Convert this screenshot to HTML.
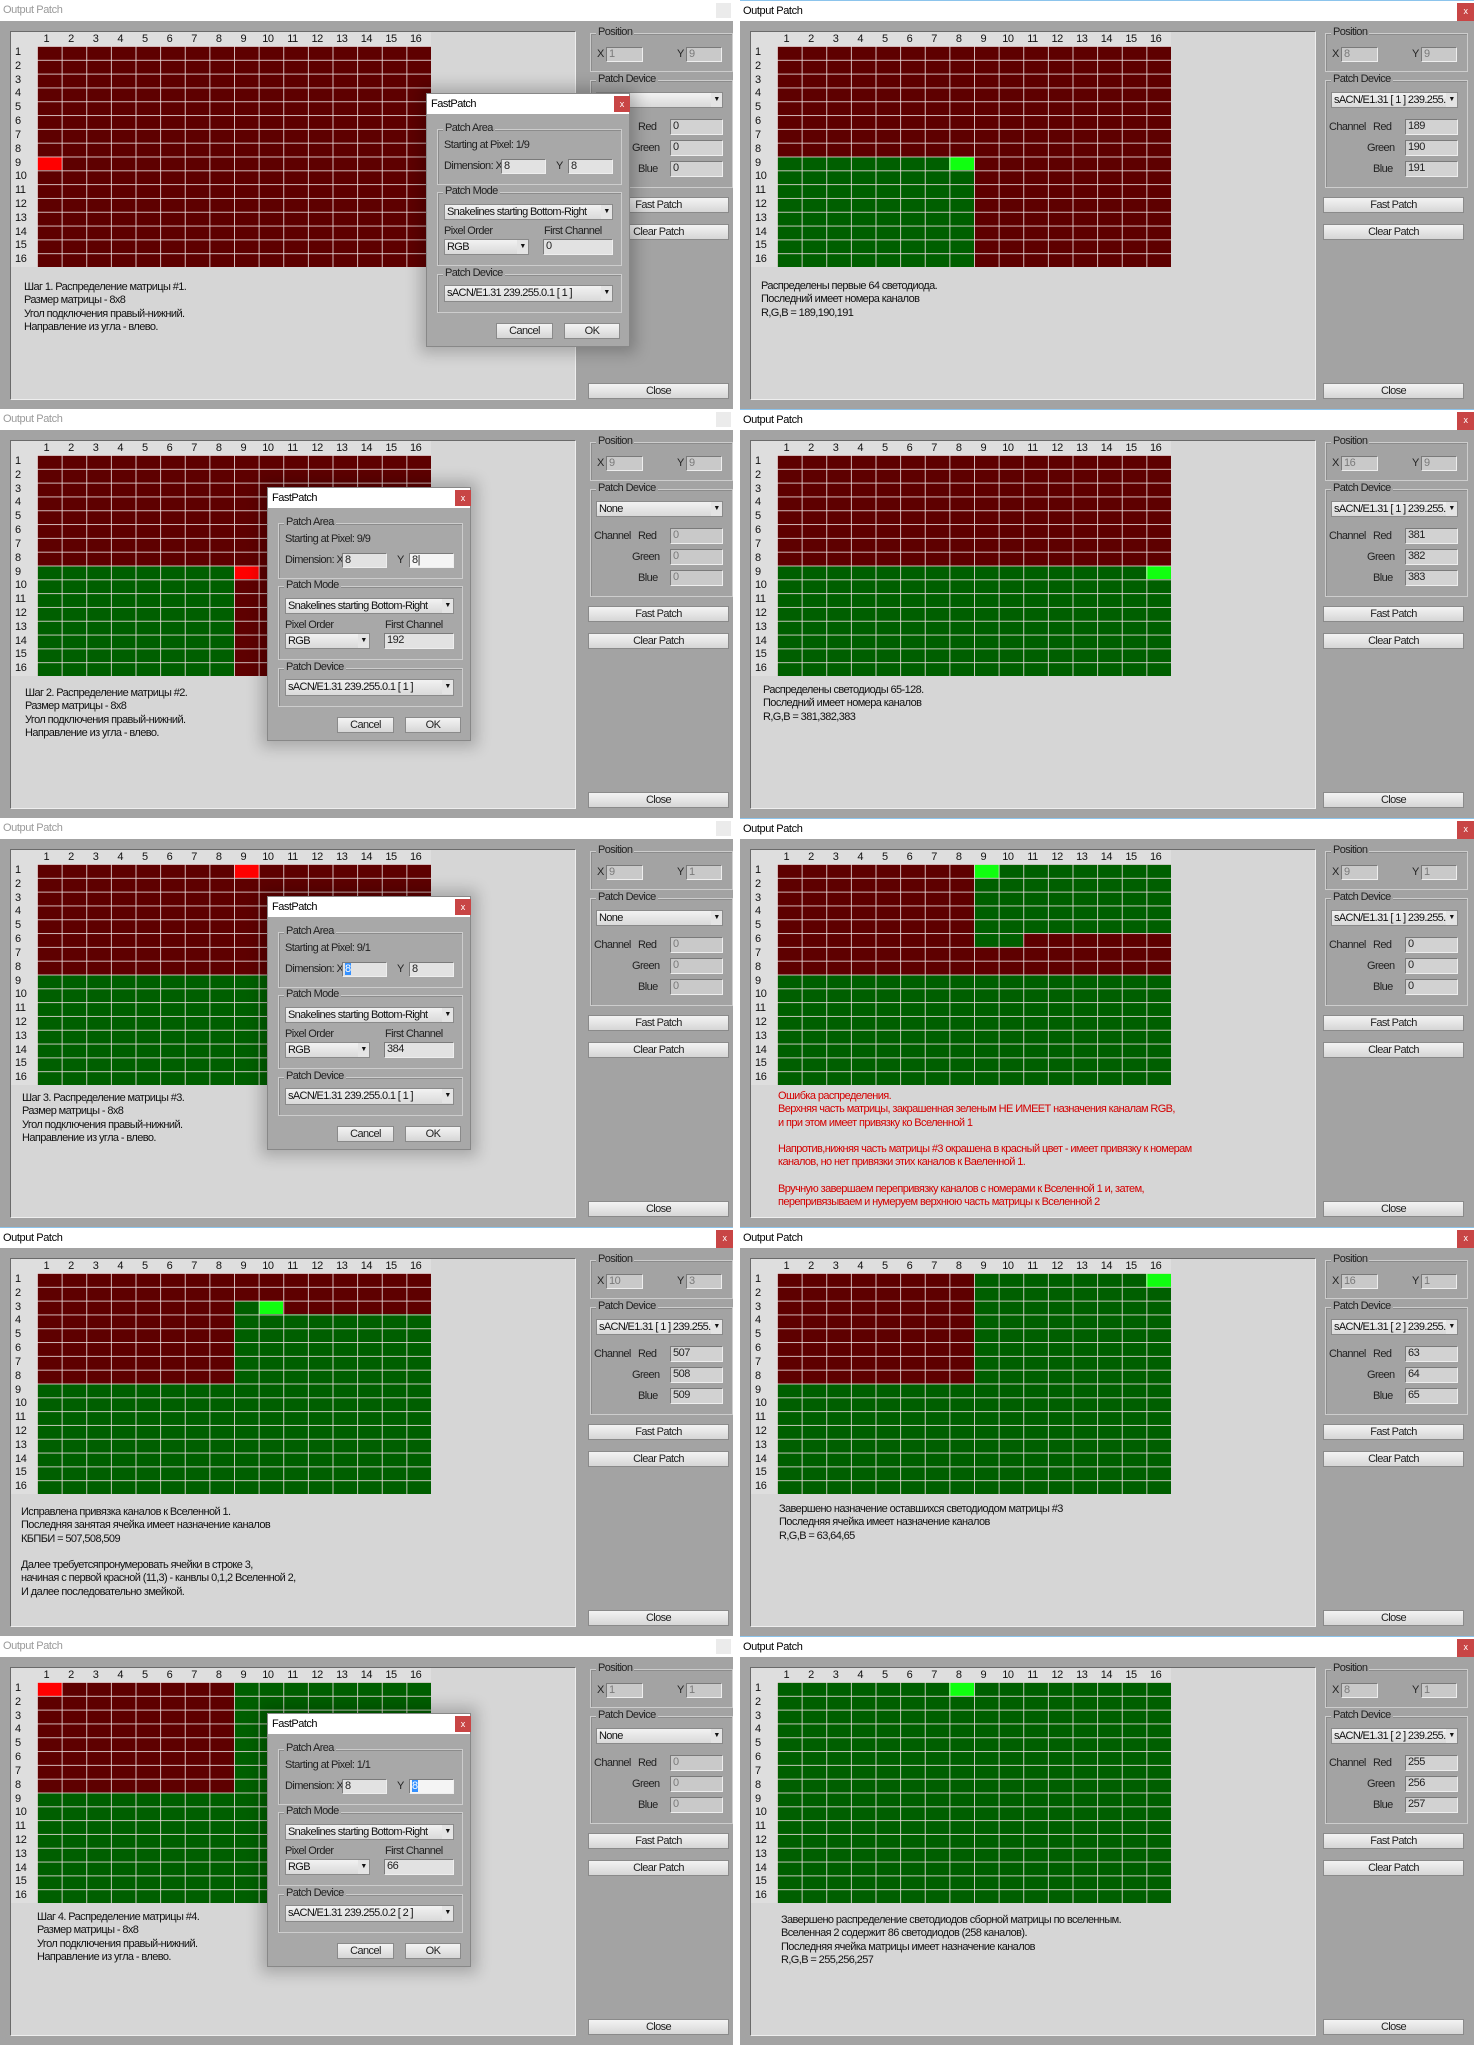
<!DOCTYPE html>
<html><head><meta charset="utf-8">
<style>
body{margin:0;width:1474px;height:2045px;position:relative;background:#fff;font-family:"Liberation Sans",Arial,sans-serif;font-size:11px;overflow:hidden}
.w{position:absolute;width:733px;height:409px;background:#a3a3a3;overflow:hidden;--bg:#a3a3a3}
.w.r{width:734px}
.tb{position:absolute;left:0;top:0;right:0;height:21px;background:#fff;color:#9a9a9a;font-size:11px;line-height:21px;padding-left:3px;box-sizing:border-box;letter-spacing:-.4px}
.a .tb{color:#000;border-top:1px solid #8cc4ec;line-height:20px}
.cx{position:absolute;right:2px;top:3px;width:15px;height:15px;background:#ebebeb}
.a .cx{background:#c84545;color:#fff;font-size:9px;text-align:center;line-height:17px;right:0;top:2px;width:17px;height:18px}
.ip{position:absolute;left:10px;top:31px;width:564px;height:367px;background:#d6d6d6;border:1px solid;border-color:#6a6a6a #eee #eee #6a6a6a}
.hd{position:absolute;left:11px;top:32px;width:420px;height:235px;background:#dedede}
.ch{position:absolute;left:37px;top:32px;width:394px;height:14px;display:flex;color:#111;letter-spacing:-.4px}
.ch span{flex:1;text-align:center;padding-right:6px;line-height:14px}
.rh{position:absolute;left:15px;top:46px;width:20px;color:#111;letter-spacing:-.4px}
.rh span{display:block;height:13.8125px;line-height:13.8px}
.g{position:absolute;left:37px;top:46px;width:394px;height:221px;background:#5e0000}
.g.gn{background:#005f00}
.g i{position:absolute;display:block}
.R{background:#5e0000}.G{background:#005f00}.BR{background:#ff0000}.BG{background:#10ff10}
.g:after{content:"";position:absolute;left:0;top:0;right:0;bottom:0;background-image:linear-gradient(to right,rgba(232,218,218,.85) 1px,transparent 1px),linear-gradient(to bottom,rgba(232,218,218,.85) 1px,transparent 1px);background-size:24.625px 13.8125px}
.tx{position:absolute;line-height:13.3px;color:#111;letter-spacing:-.6px;white-space:nowrap}
.tx.red{color:#d40000}
.ctl{position:absolute;left:588px;top:0;width:146px;height:409px}
.r .ctl{left:583px}
.gb{position:absolute;border:1px solid #cdcdcd;box-shadow:inset 1px 1px 0 #8c8c8c}
.gl{position:absolute;top:-8px;left:5px;background:var(--bg);padding:0 2px;line-height:13px;color:#222;letter-spacing:-.6px}
.in{position:absolute;height:15px;background:#c9c9c9;border:1px solid #7a7a7a;border-right-color:#eee;border-bottom-color:#eee;box-sizing:border-box;padding-left:2px;line-height:13px;color:#7a7a7a;letter-spacing:-.5px}
.in.v{background:#d2d2d2;color:#222}
.dd{position:absolute;height:16px;background:linear-gradient(#f2f2f2,#d9d9d9);border:1px solid #8a8a8a;box-sizing:border-box;padding-left:2px;line-height:14px;color:#111;white-space:nowrap;overflow:hidden;letter-spacing:-.65px}
.dd b{position:absolute;right:0;top:0;width:11px;text-align:center;font-size:7px;font-weight:normal;background:#e4e4e4}
.bt{position:absolute;height:16px;background:linear-gradient(#f3f3f3,#d6d6d6);border:1px solid #8a8a8a;box-sizing:border-box;text-align:center;line-height:14px;color:#222;letter-spacing:-.6px}
.lb{position:absolute;line-height:13px;color:#222;letter-spacing:-.6px;white-space:nowrap}
.dl{position:absolute;width:204px;height:254px;background:#a8a8a8;box-shadow:0 0 14px 6px rgba(0,0,0,.22);border:1px solid #888;box-sizing:border-box;--bg:#a8a8a8}
.dt{position:absolute;left:0;top:0;right:0;height:20px;background:#fff;line-height:20px;padding-left:4px;color:#000;letter-spacing:-.5px}
.dx{position:absolute;left:187px;top:2px;width:16px;height:16px;background:#c84545;color:#fff;font-size:9px;text-align:center;line-height:16px}
.dl .in{background:#e2e2e2;color:#222}
.sel{background:#3390ff;color:#fff}
</style></head><body>

<!-- ROW 1 LEFT -->
<div class="w" style="left:0;top:0">
<div class="tb">Output Patch<div class="cx"></div></div>
<div class="ip"></div><div class="hd"></div>
<div class="ch"><span>1</span><span>2</span><span>3</span><span>4</span><span>5</span><span>6</span><span>7</span><span>8</span><span>9</span><span>10</span><span>11</span><span>12</span><span>13</span><span>14</span><span>15</span><span>16</span></div>
<div class="rh"><span>1</span><span>2</span><span>3</span><span>4</span><span>5</span><span>6</span><span>7</span><span>8</span><span>9</span><span>10</span><span>11</span><span>12</span><span>13</span><span>14</span><span>15</span><span>16</span></div>
<div class="g"><i class="BR" style="left:0;top:50%;width:6.25%;height:6.25%"></i></div>
<div class="tx" style="left:24px;top:281px">Шаг 1. Распределение матрицы #1.<br>Размер матрицы - 8x8<br>Угол подключения правый-нижний.<br>Направление из угла - влево.</div>
<div class="ctl">
<div class="gb" style="left:2px;top:33px;width:141px;height:37px"><span class="gl">Position</span></div>
<div class="lb" style="left:9px;top:48px">X</div><div class="in" style="left:18px;top:47px;width:37px">1</div>
<div class="lb" style="left:89px;top:48px">Y</div><div class="in" style="left:98px;top:47px;width:36px">9</div>
<div class="gb" style="left:2px;top:80px;width:141px;height:106px"><span class="gl">Patch Device</span></div>
<div class="dd" style="left:8px;top:92px;width:127px"><b>▼</b></div>
<div class="lb" style="left:50px;top:121px">Red</div><div class="in v" style="left:82px;top:119px;width:53px;height:16px">0</div>
<div class="lb" style="left:44px;top:142px">Green</div><div class="in v" style="left:82px;top:140px;width:53px;height:16px">0</div>
<div class="lb" style="left:50px;top:163px">Blue</div><div class="in v" style="left:82px;top:161px;width:53px;height:16px">0</div>
<div class="bt" style="left:0;top:197px;width:141px">Fast Patch</div>
<div class="bt" style="left:0;top:224px;width:141px">Clear Patch</div>
<div class="bt" style="left:0;top:383px;width:141px">Close</div>
</div>
<div class="dl" style="left:426px;top:93px">
<div class="dt">FastPatch</div><div class="dx">x</div>
<div class="gb" style="left:10px;top:35px;width:183px;height:54px"><span class="gl">Patch Area</span></div>
<div class="lb" style="left:17px;top:45px">Starting at Pixel: 1/9</div>
<div class="lb" style="left:17px;top:66px">Dimension: X</div><div class="in" style="left:74px;top:65px;width:45px">8</div>
<div class="lb" style="left:129px;top:66px">Y</div><div class="in" style="left:141px;top:65px;width:45px">8</div>
<div class="gb" style="left:10px;top:98px;width:183px;height:72px"><span class="gl">Patch Mode</span></div>
<div class="dd" style="left:17px;top:110px;width:169px">Snakelines starting Bottom-Right<b>▼</b></div>
<div class="lb" style="left:17px;top:131px">Pixel Order</div><div class="lb" style="left:117px;top:131px">First Channel</div>
<div class="dd" style="left:17px;top:145px;width:85px">RGB<b>▼</b></div>
<div class="in" style="left:116px;top:145px;width:70px;height:16px">0</div>
<div class="gb" style="left:10px;top:180px;width:183px;height:37px"><span class="gl">Patch Device</span></div>
<div class="dd" style="left:17px;top:191px;width:169px;height:17px">sACN/E1.31 239.255.0.1 [ 1 ]<b>▼</b></div>
<div class="bt" style="left:69px;top:229px;width:57px">Cancel</div>
<div class="bt" style="left:137px;top:229px;width:56px">OK</div>
</div>
</div>

<!-- ROW 1 RIGHT -->
<div class="w r a" style="left:740px;top:0">
<div class="tb">Output Patch<div class="cx">x</div></div>
<div class="ip"></div><div class="hd"></div>
<div class="ch"><span>1</span><span>2</span><span>3</span><span>4</span><span>5</span><span>6</span><span>7</span><span>8</span><span>9</span><span>10</span><span>11</span><span>12</span><span>13</span><span>14</span><span>15</span><span>16</span></div>
<div class="rh"><span>1</span><span>2</span><span>3</span><span>4</span><span>5</span><span>6</span><span>7</span><span>8</span><span>9</span><span>10</span><span>11</span><span>12</span><span>13</span><span>14</span><span>15</span><span>16</span></div>
<div class="g"><i class="G" style="left:0;top:50%;width:50%;height:50%"></i><i class="BG" style="left:43.75%;top:50%;width:6.25%;height:6.25%"></i></div>
<div class="tx" style="left:21px;top:280px">Распределены первые 64 светодиода.<br>Последний имеет номера каналов<br>R,G,B = 189,190,191</div>
<div class="ctl">
<div class="gb" style="left:2px;top:33px;width:141px;height:37px"><span class="gl">Position</span></div>
<div class="lb" style="left:9px;top:48px">X</div><div class="in" style="left:18px;top:47px;width:37px">8</div>
<div class="lb" style="left:89px;top:48px">Y</div><div class="in" style="left:98px;top:47px;width:36px">9</div>
<div class="gb" style="left:2px;top:80px;width:141px;height:106px"><span class="gl">Patch Device</span></div>
<div class="dd" style="left:8px;top:92px;width:127px">sACN/E1.31 [ 1 ] 239.255.0<b>▼</b></div>
<div class="lb" style="left:6px;top:121px">Channel</div>
<div class="lb" style="left:50px;top:121px">Red</div><div class="in v" style="left:82px;top:119px;width:53px;height:16px">189</div>
<div class="lb" style="left:44px;top:142px">Green</div><div class="in v" style="left:82px;top:140px;width:53px;height:16px">190</div>
<div class="lb" style="left:50px;top:163px">Blue</div><div class="in v" style="left:82px;top:161px;width:53px;height:16px">191</div>
<div class="bt" style="left:0;top:197px;width:141px">Fast Patch</div>
<div class="bt" style="left:0;top:224px;width:141px">Clear Patch</div>
<div class="bt" style="left:0;top:383px;width:141px">Close</div>
</div>
</div>

<!-- ROW 2 LEFT -->
<div class="w" style="left:0;top:409px">
<div class="tb">Output Patch<div class="cx"></div></div>
<div class="ip"></div><div class="hd"></div>
<div class="ch"><span>1</span><span>2</span><span>3</span><span>4</span><span>5</span><span>6</span><span>7</span><span>8</span><span>9</span><span>10</span><span>11</span><span>12</span><span>13</span><span>14</span><span>15</span><span>16</span></div>
<div class="rh"><span>1</span><span>2</span><span>3</span><span>4</span><span>5</span><span>6</span><span>7</span><span>8</span><span>9</span><span>10</span><span>11</span><span>12</span><span>13</span><span>14</span><span>15</span><span>16</span></div>
<div class="g"><i class="G" style="left:0;top:50%;width:50%;height:50%"></i><i class="BR" style="left:50%;top:50%;width:6.25%;height:6.25%"></i></div>
<div class="tx" style="left:25px;top:278px">Шаг 2. Распределение матрицы #2.<br>Размер матрицы - 8x8<br>Угол подключения правый-нижний.<br>Направление из угла - влево.</div>
<div class="ctl">
<div class="gb" style="left:2px;top:33px;width:141px;height:37px"><span class="gl">Position</span></div>
<div class="lb" style="left:9px;top:48px">X</div><div class="in" style="left:18px;top:47px;width:37px">9</div>
<div class="lb" style="left:89px;top:48px">Y</div><div class="in" style="left:98px;top:47px;width:36px">9</div>
<div class="gb" style="left:2px;top:80px;width:141px;height:106px"><span class="gl">Patch Device</span></div>
<div class="dd" style="left:8px;top:92px;width:127px">None<b>▼</b></div>
<div class="lb" style="left:6px;top:121px">Channel</div>
<div class="lb" style="left:50px;top:121px">Red</div><div class="in" style="left:82px;top:119px;width:53px;height:16px">0</div>
<div class="lb" style="left:44px;top:142px">Green</div><div class="in" style="left:82px;top:140px;width:53px;height:16px">0</div>
<div class="lb" style="left:50px;top:163px">Blue</div><div class="in" style="left:82px;top:161px;width:53px;height:16px">0</div>
<div class="bt" style="left:0;top:197px;width:141px">Fast Patch</div>
<div class="bt" style="left:0;top:224px;width:141px">Clear Patch</div>
<div class="bt" style="left:0;top:383px;width:141px">Close</div>
</div>
<div class="dl" style="left:267px;top:78px">
<div class="dt">FastPatch</div><div class="dx">x</div>
<div class="gb" style="left:10px;top:35px;width:183px;height:54px"><span class="gl">Patch Area</span></div>
<div class="lb" style="left:17px;top:45px">Starting at Pixel: 9/9</div>
<div class="lb" style="left:17px;top:66px">Dimension: X</div><div class="in" style="left:74px;top:65px;width:45px">8</div>
<div class="lb" style="left:129px;top:66px">Y</div><div class="in" style="left:141px;top:65px;width:45px;background:#f4f4f4">8|</div>
<div class="gb" style="left:10px;top:98px;width:183px;height:72px"><span class="gl">Patch Mode</span></div>
<div class="dd" style="left:17px;top:110px;width:169px">Snakelines starting Bottom-Right<b>▼</b></div>
<div class="lb" style="left:17px;top:131px">Pixel Order</div><div class="lb" style="left:117px;top:131px">First Channel</div>
<div class="dd" style="left:17px;top:145px;width:85px">RGB<b>▼</b></div>
<div class="in" style="left:116px;top:145px;width:70px;height:16px">192</div>
<div class="gb" style="left:10px;top:180px;width:183px;height:37px"><span class="gl">Patch Device</span></div>
<div class="dd" style="left:17px;top:191px;width:169px;height:17px">sACN/E1.31 239.255.0.1 [ 1 ]<b>▼</b></div>
<div class="bt" style="left:69px;top:229px;width:57px">Cancel</div>
<div class="bt" style="left:137px;top:229px;width:56px">OK</div>
</div>
</div>

<!-- ROW 2 RIGHT -->
<div class="w r a" style="left:740px;top:409px">
<div class="tb">Output Patch<div class="cx">x</div></div>
<div class="ip"></div><div class="hd"></div>
<div class="ch"><span>1</span><span>2</span><span>3</span><span>4</span><span>5</span><span>6</span><span>7</span><span>8</span><span>9</span><span>10</span><span>11</span><span>12</span><span>13</span><span>14</span><span>15</span><span>16</span></div>
<div class="rh"><span>1</span><span>2</span><span>3</span><span>4</span><span>5</span><span>6</span><span>7</span><span>8</span><span>9</span><span>10</span><span>11</span><span>12</span><span>13</span><span>14</span><span>15</span><span>16</span></div>
<div class="g"><i class="G" style="left:0;top:50%;width:100%;height:50%"></i><i class="BG" style="left:93.75%;top:50%;width:6.25%;height:6.25%"></i></div>
<div class="tx" style="left:23px;top:275px">Распределены светодиоды 65-128.<br>Последний имеет номера каналов<br>R,G,B = 381,382,383</div>
<div class="ctl">
<div class="gb" style="left:2px;top:33px;width:141px;height:37px"><span class="gl">Position</span></div>
<div class="lb" style="left:9px;top:48px">X</div><div class="in" style="left:18px;top:47px;width:37px">16</div>
<div class="lb" style="left:89px;top:48px">Y</div><div class="in" style="left:98px;top:47px;width:36px">9</div>
<div class="gb" style="left:2px;top:80px;width:141px;height:106px"><span class="gl">Patch Device</span></div>
<div class="dd" style="left:8px;top:92px;width:127px">sACN/E1.31 [ 1 ] 239.255.0<b>▼</b></div>
<div class="lb" style="left:6px;top:121px">Channel</div>
<div class="lb" style="left:50px;top:121px">Red</div><div class="in v" style="left:82px;top:119px;width:53px;height:16px">381</div>
<div class="lb" style="left:44px;top:142px">Green</div><div class="in v" style="left:82px;top:140px;width:53px;height:16px">382</div>
<div class="lb" style="left:50px;top:163px">Blue</div><div class="in v" style="left:82px;top:161px;width:53px;height:16px">383</div>
<div class="bt" style="left:0;top:197px;width:141px">Fast Patch</div>
<div class="bt" style="left:0;top:224px;width:141px">Clear Patch</div>
<div class="bt" style="left:0;top:383px;width:141px">Close</div>
</div>
</div>

<!-- ROW 3 LEFT -->
<div class="w" style="left:0;top:818px">
<div class="tb">Output Patch<div class="cx"></div></div>
<div class="ip"></div><div class="hd"></div>
<div class="ch"><span>1</span><span>2</span><span>3</span><span>4</span><span>5</span><span>6</span><span>7</span><span>8</span><span>9</span><span>10</span><span>11</span><span>12</span><span>13</span><span>14</span><span>15</span><span>16</span></div>
<div class="rh"><span>1</span><span>2</span><span>3</span><span>4</span><span>5</span><span>6</span><span>7</span><span>8</span><span>9</span><span>10</span><span>11</span><span>12</span><span>13</span><span>14</span><span>15</span><span>16</span></div>
<div class="g"><i class="G" style="left:0;top:50%;width:100%;height:50%"></i><i class="BR" style="left:50%;top:0;width:6.25%;height:6.25%"></i></div>
<div class="tx" style="left:22px;top:274px">Шаг 3. Распределение матрицы #3.<br>Размер матрицы - 8x8<br>Угол подключения правый-нижний.<br>Направление из угла - влево.</div>
<div class="ctl">
<div class="gb" style="left:2px;top:33px;width:141px;height:37px"><span class="gl">Position</span></div>
<div class="lb" style="left:9px;top:48px">X</div><div class="in" style="left:18px;top:47px;width:37px">9</div>
<div class="lb" style="left:89px;top:48px">Y</div><div class="in" style="left:98px;top:47px;width:36px">1</div>
<div class="gb" style="left:2px;top:80px;width:141px;height:106px"><span class="gl">Patch Device</span></div>
<div class="dd" style="left:8px;top:92px;width:127px">None<b>▼</b></div>
<div class="lb" style="left:6px;top:121px">Channel</div>
<div class="lb" style="left:50px;top:121px">Red</div><div class="in" style="left:82px;top:119px;width:53px;height:16px">0</div>
<div class="lb" style="left:44px;top:142px">Green</div><div class="in" style="left:82px;top:140px;width:53px;height:16px">0</div>
<div class="lb" style="left:50px;top:163px">Blue</div><div class="in" style="left:82px;top:161px;width:53px;height:16px">0</div>
<div class="bt" style="left:0;top:197px;width:141px">Fast Patch</div>
<div class="bt" style="left:0;top:224px;width:141px">Clear Patch</div>
<div class="bt" style="left:0;top:383px;width:141px">Close</div>
</div>
<div class="dl" style="left:267px;top:78px">
<div class="dt">FastPatch</div><div class="dx">x</div>
<div class="gb" style="left:10px;top:35px;width:183px;height:54px"><span class="gl">Patch Area</span></div>
<div class="lb" style="left:17px;top:45px">Starting at Pixel: 9/1</div>
<div class="lb" style="left:17px;top:66px">Dimension: X</div><div class="in" style="left:74px;top:65px;width:45px"><span class="sel">8</span></div>
<div class="lb" style="left:129px;top:66px">Y</div><div class="in" style="left:141px;top:65px;width:45px">8</div>
<div class="gb" style="left:10px;top:98px;width:183px;height:72px"><span class="gl">Patch Mode</span></div>
<div class="dd" style="left:17px;top:110px;width:169px">Snakelines starting Bottom-Right<b>▼</b></div>
<div class="lb" style="left:17px;top:131px">Pixel Order</div><div class="lb" style="left:117px;top:131px">First Channel</div>
<div class="dd" style="left:17px;top:145px;width:85px">RGB<b>▼</b></div>
<div class="in" style="left:116px;top:145px;width:70px;height:16px">384</div>
<div class="gb" style="left:10px;top:180px;width:183px;height:37px"><span class="gl">Patch Device</span></div>
<div class="dd" style="left:17px;top:191px;width:169px;height:17px">sACN/E1.31 239.255.0.1 [ 1 ]<b>▼</b></div>
<div class="bt" style="left:69px;top:229px;width:57px">Cancel</div>
<div class="bt" style="left:137px;top:229px;width:56px">OK</div>
</div>
</div>

<!-- ROW 3 RIGHT -->
<div class="w r a" style="left:740px;top:818px">
<div class="tb">Output Patch<div class="cx">x</div></div>
<div class="ip"></div><div class="hd"></div>
<div class="ch"><span>1</span><span>2</span><span>3</span><span>4</span><span>5</span><span>6</span><span>7</span><span>8</span><span>9</span><span>10</span><span>11</span><span>12</span><span>13</span><span>14</span><span>15</span><span>16</span></div>
<div class="rh"><span>1</span><span>2</span><span>3</span><span>4</span><span>5</span><span>6</span><span>7</span><span>8</span><span>9</span><span>10</span><span>11</span><span>12</span><span>13</span><span>14</span><span>15</span><span>16</span></div>
<div class="g"><i class="G" style="left:0;top:50%;width:100%;height:50%"></i><i class="G" style="left:50%;top:0;width:50%;height:31.25%"></i><i class="G" style="left:50%;top:31.25%;width:12.5%;height:6.25%"></i><i class="BG" style="left:50%;top:0;width:6.25%;height:6.25%"></i></div>
<div class="tx red" style="left:38px;top:272px">Ошибка распределения.<br>Верхняя часть матрицы, закрашенная зеленым НЕ ИМЕЕТ назначения каналам RGB,<br>и при этом имеет привязку ко Вселенной 1<br>&nbsp;<br>Напротив,нижняя часть матрицы #3 окрашена в красный цвет - имеет привязку к номерам<br>каналов, но нет привязки этих каналов к Ваеленной 1.<br>&nbsp;<br>Вручную завершаем перепривязку каналов с номерами к Вселенной 1 и, затем,<br>перепривязываем и нумеруем верхнюю часть матрицы к Вселенной 2</div>
<div class="ctl">
<div class="gb" style="left:2px;top:33px;width:141px;height:37px"><span class="gl">Position</span></div>
<div class="lb" style="left:9px;top:48px">X</div><div class="in" style="left:18px;top:47px;width:37px">9</div>
<div class="lb" style="left:89px;top:48px">Y</div><div class="in" style="left:98px;top:47px;width:36px">1</div>
<div class="gb" style="left:2px;top:80px;width:141px;height:106px"><span class="gl">Patch Device</span></div>
<div class="dd" style="left:8px;top:92px;width:127px">sACN/E1.31 [ 1 ] 239.255.0<b>▼</b></div>
<div class="lb" style="left:6px;top:121px">Channel</div>
<div class="lb" style="left:50px;top:121px">Red</div><div class="in v" style="left:82px;top:119px;width:53px;height:16px">0</div>
<div class="lb" style="left:44px;top:142px">Green</div><div class="in v" style="left:82px;top:140px;width:53px;height:16px">0</div>
<div class="lb" style="left:50px;top:163px">Blue</div><div class="in v" style="left:82px;top:161px;width:53px;height:16px">0</div>
<div class="bt" style="left:0;top:197px;width:141px">Fast Patch</div>
<div class="bt" style="left:0;top:224px;width:141px">Clear Patch</div>
<div class="bt" style="left:0;top:383px;width:141px">Close</div>
</div>
</div>

<!-- ROW 4 LEFT -->
<div class="w a" style="left:0;top:1227px">
<div class="tb">Output Patch<div class="cx">x</div></div>
<div class="ip"></div><div class="hd"></div>
<div class="ch"><span>1</span><span>2</span><span>3</span><span>4</span><span>5</span><span>6</span><span>7</span><span>8</span><span>9</span><span>10</span><span>11</span><span>12</span><span>13</span><span>14</span><span>15</span><span>16</span></div>
<div class="rh"><span>1</span><span>2</span><span>3</span><span>4</span><span>5</span><span>6</span><span>7</span><span>8</span><span>9</span><span>10</span><span>11</span><span>12</span><span>13</span><span>14</span><span>15</span><span>16</span></div>
<div class="g gn"><i class="R" style="left:0;top:0;width:50%;height:50%"></i><i class="R" style="left:50%;top:0;width:50%;height:12.5%"></i><i class="R" style="left:62.5%;top:12.5%;width:37.5%;height:6.25%"></i><i class="BG" style="left:56.25%;top:12.5%;width:6.25%;height:6.25%"></i></div>
<div class="tx" style="left:21px;top:279px">Исправлена привязка каналов к Вселенной 1.<br>Последняя занятая ячейка имеет назначение каналов<br>КБПБИ = 507,508,509<br>&nbsp;<br>Далее требуетсяпронумеровать ячейки в строке 3,<br>начиная с первой красной (11,3) - канвлы 0,1,2 Вселенной 2,<br>И далее последовательно змейкой.</div>
<div class="ctl">
<div class="gb" style="left:2px;top:33px;width:141px;height:37px"><span class="gl">Position</span></div>
<div class="lb" style="left:9px;top:48px">X</div><div class="in" style="left:18px;top:47px;width:37px">10</div>
<div class="lb" style="left:89px;top:48px">Y</div><div class="in" style="left:98px;top:47px;width:36px">3</div>
<div class="gb" style="left:2px;top:80px;width:141px;height:106px"><span class="gl">Patch Device</span></div>
<div class="dd" style="left:8px;top:92px;width:127px">sACN/E1.31 [ 1 ] 239.255.0<b>▼</b></div>
<div class="lb" style="left:6px;top:121px">Channel</div>
<div class="lb" style="left:50px;top:121px">Red</div><div class="in v" style="left:82px;top:119px;width:53px;height:16px">507</div>
<div class="lb" style="left:44px;top:142px">Green</div><div class="in v" style="left:82px;top:140px;width:53px;height:16px">508</div>
<div class="lb" style="left:50px;top:163px">Blue</div><div class="in v" style="left:82px;top:161px;width:53px;height:16px">509</div>
<div class="bt" style="left:0;top:197px;width:141px">Fast Patch</div>
<div class="bt" style="left:0;top:224px;width:141px">Clear Patch</div>
<div class="bt" style="left:0;top:383px;width:141px">Close</div>
</div>
</div>

<!-- ROW 4 RIGHT -->
<div class="w r a" style="left:740px;top:1227px">
<div class="tb">Output Patch<div class="cx">x</div></div>
<div class="ip"></div><div class="hd"></div>
<div class="ch"><span>1</span><span>2</span><span>3</span><span>4</span><span>5</span><span>6</span><span>7</span><span>8</span><span>9</span><span>10</span><span>11</span><span>12</span><span>13</span><span>14</span><span>15</span><span>16</span></div>
<div class="rh"><span>1</span><span>2</span><span>3</span><span>4</span><span>5</span><span>6</span><span>7</span><span>8</span><span>9</span><span>10</span><span>11</span><span>12</span><span>13</span><span>14</span><span>15</span><span>16</span></div>
<div class="g gn"><i class="R" style="left:0;top:0;width:50%;height:50%"></i><i class="BG" style="left:93.75%;top:0;width:6.25%;height:6.25%"></i></div>
<div class="tx" style="left:39px;top:276px">Завершено назначение оставшихся светодиодом матрицы #3<br>Последняя ячейка имеет назначение каналов<br>R,G,B = 63,64,65</div>
<div class="ctl">
<div class="gb" style="left:2px;top:33px;width:141px;height:37px"><span class="gl">Position</span></div>
<div class="lb" style="left:9px;top:48px">X</div><div class="in" style="left:18px;top:47px;width:37px">16</div>
<div class="lb" style="left:89px;top:48px">Y</div><div class="in" style="left:98px;top:47px;width:36px">1</div>
<div class="gb" style="left:2px;top:80px;width:141px;height:106px"><span class="gl">Patch Device</span></div>
<div class="dd" style="left:8px;top:92px;width:127px">sACN/E1.31 [ 2 ] 239.255.0<b>▼</b></div>
<div class="lb" style="left:6px;top:121px">Channel</div>
<div class="lb" style="left:50px;top:121px">Red</div><div class="in v" style="left:82px;top:119px;width:53px;height:16px">63</div>
<div class="lb" style="left:44px;top:142px">Green</div><div class="in v" style="left:82px;top:140px;width:53px;height:16px">64</div>
<div class="lb" style="left:50px;top:163px">Blue</div><div class="in v" style="left:82px;top:161px;width:53px;height:16px">65</div>
<div class="bt" style="left:0;top:197px;width:141px">Fast Patch</div>
<div class="bt" style="left:0;top:224px;width:141px">Clear Patch</div>
<div class="bt" style="left:0;top:383px;width:141px">Close</div>
</div>
</div>

<!-- ROW 5 LEFT -->
<div class="w" style="left:0;top:1636px">
<div class="tb">Output Patch<div class="cx"></div></div>
<div class="ip"></div><div class="hd"></div>
<div class="ch"><span>1</span><span>2</span><span>3</span><span>4</span><span>5</span><span>6</span><span>7</span><span>8</span><span>9</span><span>10</span><span>11</span><span>12</span><span>13</span><span>14</span><span>15</span><span>16</span></div>
<div class="rh"><span>1</span><span>2</span><span>3</span><span>4</span><span>5</span><span>6</span><span>7</span><span>8</span><span>9</span><span>10</span><span>11</span><span>12</span><span>13</span><span>14</span><span>15</span><span>16</span></div>
<div class="g gn"><i class="R" style="left:0;top:0;width:50%;height:50%"></i><i class="BR" style="left:0;top:0;width:6.25%;height:6.25%"></i></div>
<div class="tx" style="left:37px;top:275px">Шаг 4. Распределение матрицы #4.<br>Размер матрицы - 8x8<br>Угол подключения правый-нижний.<br>Направление из угла - влево.</div>
<div class="ctl">
<div class="gb" style="left:2px;top:33px;width:141px;height:37px"><span class="gl">Position</span></div>
<div class="lb" style="left:9px;top:48px">X</div><div class="in" style="left:18px;top:47px;width:37px">1</div>
<div class="lb" style="left:89px;top:48px">Y</div><div class="in" style="left:98px;top:47px;width:36px">1</div>
<div class="gb" style="left:2px;top:80px;width:141px;height:106px"><span class="gl">Patch Device</span></div>
<div class="dd" style="left:8px;top:92px;width:127px">None<b>▼</b></div>
<div class="lb" style="left:6px;top:121px">Channel</div>
<div class="lb" style="left:50px;top:121px">Red</div><div class="in" style="left:82px;top:119px;width:53px;height:16px">0</div>
<div class="lb" style="left:44px;top:142px">Green</div><div class="in" style="left:82px;top:140px;width:53px;height:16px">0</div>
<div class="lb" style="left:50px;top:163px">Blue</div><div class="in" style="left:82px;top:161px;width:53px;height:16px">0</div>
<div class="bt" style="left:0;top:197px;width:141px">Fast Patch</div>
<div class="bt" style="left:0;top:224px;width:141px">Clear Patch</div>
<div class="bt" style="left:0;top:383px;width:141px">Close</div>
</div>
<div class="dl" style="left:267px;top:77px">
<div class="dt">FastPatch</div><div class="dx">x</div>
<div class="gb" style="left:10px;top:35px;width:183px;height:54px"><span class="gl">Patch Area</span></div>
<div class="lb" style="left:17px;top:45px">Starting at Pixel: 1/1</div>
<div class="lb" style="left:17px;top:66px">Dimension: X</div><div class="in" style="left:74px;top:65px;width:45px">8</div>
<div class="lb" style="left:129px;top:66px">Y</div><div class="in" style="left:141px;top:65px;width:45px;background:#f4f4f4"><span class="sel">8</span></div>
<div class="gb" style="left:10px;top:98px;width:183px;height:72px"><span class="gl">Patch Mode</span></div>
<div class="dd" style="left:17px;top:110px;width:169px">Snakelines starting Bottom-Right<b>▼</b></div>
<div class="lb" style="left:17px;top:131px">Pixel Order</div><div class="lb" style="left:117px;top:131px">First Channel</div>
<div class="dd" style="left:17px;top:145px;width:85px">RGB<b>▼</b></div>
<div class="in" style="left:116px;top:145px;width:70px;height:16px">66</div>
<div class="gb" style="left:10px;top:180px;width:183px;height:37px"><span class="gl">Patch Device</span></div>
<div class="dd" style="left:17px;top:191px;width:169px;height:17px">sACN/E1.31 239.255.0.2 [ 2 ]<b>▼</b></div>
<div class="bt" style="left:69px;top:229px;width:57px">Cancel</div>
<div class="bt" style="left:137px;top:229px;width:56px">OK</div>
</div>
</div>

<!-- ROW 5 RIGHT -->
<div class="w r a" style="left:740px;top:1636px">
<div class="tb">Output Patch<div class="cx">x</div></div>
<div class="ip"></div><div class="hd"></div>
<div class="ch"><span>1</span><span>2</span><span>3</span><span>4</span><span>5</span><span>6</span><span>7</span><span>8</span><span>9</span><span>10</span><span>11</span><span>12</span><span>13</span><span>14</span><span>15</span><span>16</span></div>
<div class="rh"><span>1</span><span>2</span><span>3</span><span>4</span><span>5</span><span>6</span><span>7</span><span>8</span><span>9</span><span>10</span><span>11</span><span>12</span><span>13</span><span>14</span><span>15</span><span>16</span></div>
<div class="g gn"><i class="BG" style="left:43.75%;top:0;width:6.25%;height:6.25%"></i></div>
<div class="tx" style="left:41px;top:278px">Завершено распределение светодиодов сборной матрицы по вселенным.<br>Вселенная 2 содержит 86 светодиодов (258 каналов).<br>Последняя ячейка матрицы имеет назначение каналов<br>R,G,B = 255,256,257</div>
<div class="ctl">
<div class="gb" style="left:2px;top:33px;width:141px;height:37px"><span class="gl">Position</span></div>
<div class="lb" style="left:9px;top:48px">X</div><div class="in" style="left:18px;top:47px;width:37px">8</div>
<div class="lb" style="left:89px;top:48px">Y</div><div class="in" style="left:98px;top:47px;width:36px">1</div>
<div class="gb" style="left:2px;top:80px;width:141px;height:106px"><span class="gl">Patch Device</span></div>
<div class="dd" style="left:8px;top:92px;width:127px">sACN/E1.31 [ 2 ] 239.255.0<b>▼</b></div>
<div class="lb" style="left:6px;top:121px">Channel</div>
<div class="lb" style="left:50px;top:121px">Red</div><div class="in v" style="left:82px;top:119px;width:53px;height:16px">255</div>
<div class="lb" style="left:44px;top:142px">Green</div><div class="in v" style="left:82px;top:140px;width:53px;height:16px">256</div>
<div class="lb" style="left:50px;top:163px">Blue</div><div class="in v" style="left:82px;top:161px;width:53px;height:16px">257</div>
<div class="bt" style="left:0;top:197px;width:141px">Fast Patch</div>
<div class="bt" style="left:0;top:224px;width:141px">Clear Patch</div>
<div class="bt" style="left:0;top:383px;width:141px">Close</div>
</div>
</div>

</body></html>
